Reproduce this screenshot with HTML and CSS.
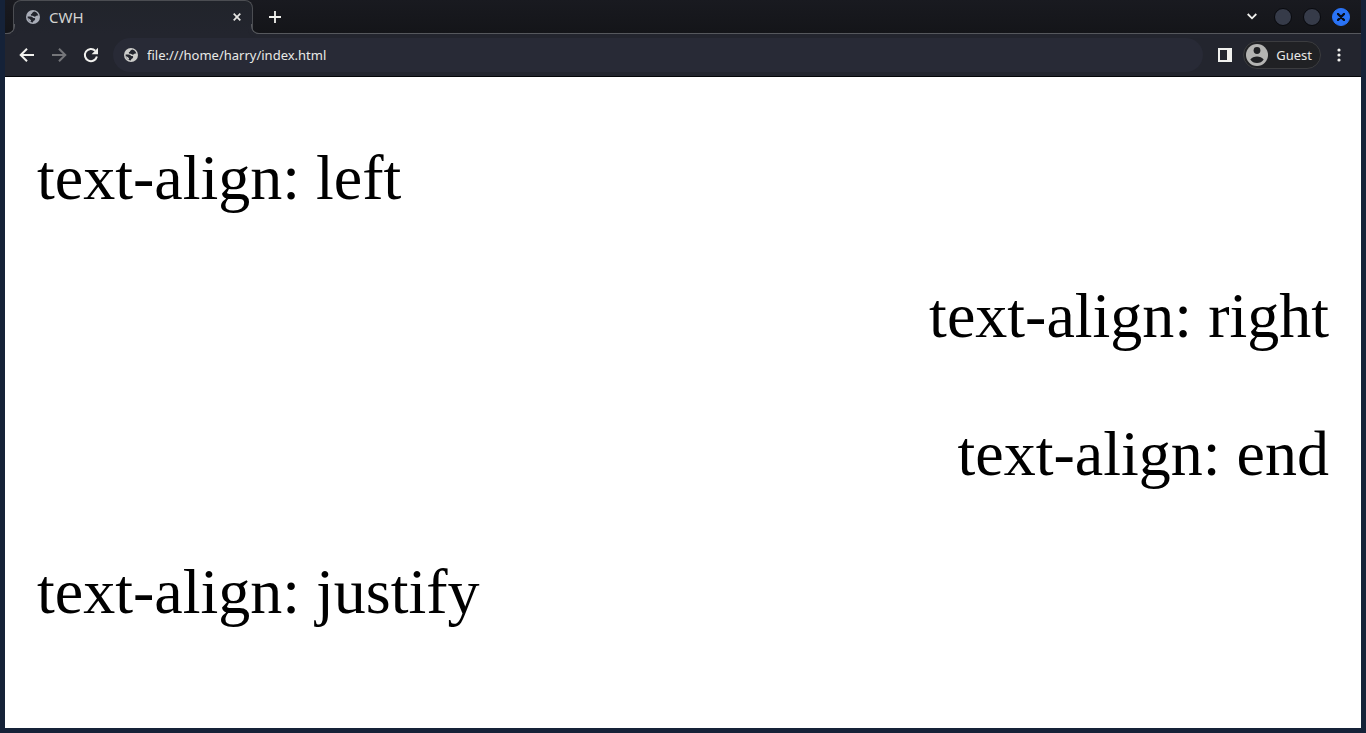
FILE: index.html
```html
<!DOCTYPE html>
<html lang="en">
<head>
<meta charset="utf-8">
<title>CWH</title>
<link rel="stylesheet" href="styles.css">
</head>
<body>
<svg class="defs" aria-hidden="true">
  <symbol id="globe" viewBox="0 0 14 14">
    <circle cx="7" cy="7" r="7" fill="currentColor"/>
    <path d="M8.200 1.600C6.800 2.200 6.300 3 5.900 3.800 4.800 4 4.500 5 5.100 5.600c.8.700 2 .2 2.600.700.8.600 1.800.4 2.300-.3.600-.6 1.500-.6 2.300-.6C11.700 3.400 10.200 2 8.200 1.600zM1.600 6.500h3.100c1.500 0 2.100.8 2.300 1.600h1.600c.9.700.7 1.900-.2 2.300-.9.300-1.200.6-1.300 1.400l-.2.700C4 12.300 1.600 10 1.600 6.500z" fill="#23252e"/>
    <path d="M1.900 8.300c1.300 0 1.600.9 2.600 1.400.8.500.6 1.500.2 2.100-1.600-.7-2.600-1.900-2.800-3.500z" fill="currentColor"/>
  </symbol>
</svg>
<div class="window">
  <header class="tabstrip">
    <div class="tab">
      <svg class="globe tab-globe" aria-hidden="true"><use href="#globe"/></svg>
      <span class="tab-title">CWH</span>
      <button class="icon-btn" aria-label="Close tab"><svg width="8" height="8" viewBox="0 0 8 8"><path d="M.7.7l6.600 6.600M7.300.7L.7 7.300" stroke="#e6e6e3" stroke-width="1.700"/></svg></button>
    </div>
    <button class="icon-btn new-tab" aria-label="New tab"><svg width="12" height="12" viewBox="0 0 12 12"><path d="M6 0v12M0 6h12" stroke="#f1f1ee" stroke-width="1.800"/></svg></button>
    <div class="controls">
      <button class="icon-btn chevron" aria-label="Search tabs"><svg width="10" height="7" viewBox="0 0 10 7"><path d="M.7 1l4.300 4.300L9.300 1" fill="none" stroke="#f1f1ee" stroke-width="1.800"/></svg></button>
      <button class="dot" aria-label="Minimize"></button>
      <button class="dot" aria-label="Maximize"></button>
      <button class="dot dot-close" aria-label="Close"><svg width="8" height="8" viewBox="0 0 8 8"><path d="M1 1l6 6M7 1L1 7" stroke="#080d18" stroke-width="2.400" stroke-linecap="round"/></svg></button>
    </div>
  </header>
  <nav class="toolbar">
    <button class="icon-btn nav-btn" aria-label="Back"><svg width="16" height="16" viewBox="0 0 16 16"><path d="M15 8H2.500M8 1.700L1.700 8 8 14.300" fill="none" stroke="#f1f1ee" stroke-width="2"/></svg></button>
    <button class="icon-btn nav-btn" aria-label="Forward"><svg width="16" height="16" viewBox="0 0 16 16"><path d="M1 8h12.500M8 1.700L14.300 8 8 14.300" fill="none" stroke="#75767a" stroke-width="2"/></svg></button>
    <button class="icon-btn nav-btn" aria-label="Reload"><svg width="16" height="16" viewBox="0 0 16 16"><path d="M13.900 9.500A6.100 6.100 0 1 1 12.300 3.700" fill="none" stroke="#f1f1ee" stroke-width="2"/><path d="M15 .8v6.400H8.600z" fill="#f1f1ee"/></svg></button>
    <label class="address">
      <svg class="globe" aria-hidden="true"><use href="#globe"/></svg>
      <input class="url" type="text" aria-label="Address" value="file:///home/harry/index.html">
    </label>
    <button class="icon-btn panel-btn" aria-label="Side panel"><svg width="14" height="14" viewBox="0 0 14 14"><path d="M0 0h14v14H0zM2 2v10h7V2z" fill="#f1f1ee" fill-rule="evenodd"/></svg></button>
    <button class="profile"><svg width="22" height="22" viewBox="0 0 22 22" aria-hidden="true"><circle cx="11" cy="11" r="11" fill="#b4b4b2"/><circle cx="11" cy="6.500" r="3.400" fill="#202124"/><path d="M4.300 15.500c1.500-2 4-3 6.700-3s5.200 1 6.700 3c-1.500 2.300-3.900 3.600-6.700 3.600s-5.200-1.300-6.700-3.600z" fill="#202124"/></svg>Guest</button>
    <button class="icon-btn menu" aria-label="Menu"><svg width="4" height="14" viewBox="0 0 4 14" fill="#f1f1ee"><circle cx="2" cy="2" r="1.600"/><circle cx="2" cy="7" r="1.600"/><circle cx="2" cy="12" r="1.600"/></svg></button>
  </nav>
  <main class="page">
    <p class="left">text-align: left</p>
    <p class="right">text-align: right</p>
    <p class="end">text-align: end</p>
    <p class="justify">text-align: justify</p>
  </main>
</div>
</body>
</html>
```
FILE: styles.css
```css
* { box-sizing: border-box; }
body {
  margin: 0;
  background: #152238;
  font-family: "Noto Sans", sans-serif;
}
button, input { font: inherit; color: inherit; border: 0; padding: 0; margin: 0; background: none; }
svg { display: block; flex: none; }
.defs { position: absolute; width: 0; height: 0; }
.window {
  display: flex;
  flex-direction: column;
  min-height: 100vh;
  padding: 0 5px 5px;
  color: #e9e9e6;
}
.icon-btn { display: flex; align-items: center; justify-content: center; flex: none; }
.tabstrip {
  display: flex;
  align-items: center;
  height: 34px;
  padding: 0 11px 0 8px;
  background: linear-gradient(#191a20, #141519);
  border-bottom: 1px solid #56585d;
}
.tab {
  position: relative;
  display: flex;
  align-items: center;
  align-self: flex-start;
  flex: none;
  width: 240px;
  height: 34px;
  margin-bottom: -1px;
  padding: 0 11px 1px 12px;
  background: linear-gradient(#21242b, #23252e);
  border: 1px solid #4b4d52;
  border-bottom: 0;
  border-radius: 8px 8px 0 0;
}
.tab::before, .tab::after {
  content: "";
  position: absolute;
  bottom: 0;
  width: 9px;
  height: 9px;
  border-bottom: 1px solid #56585d;
}
.tab::before {
  left: -9px;
  border-right: 1px solid #56585d;
  border-bottom-right-radius: 8px;
  box-shadow: 3px 3px 0 #23252e;
}
.tab::after {
  right: -9px;
  border-left: 1px solid #56585d;
  border-bottom-left-radius: 8px;
  box-shadow: -3px 3px 0 #23252e;
}
.globe { width: 14px; height: 14px; color: #cdcdcb; }
.tab-globe { color: #a9adb8; }
.tab-title { flex: 1; margin-left: 9px; font-size: 15px; line-height: 18px; padding-bottom: 1px; color: #d4d4d1; }
.new-tab { width: 24px; height: 24px; margin-left: 10px; }
.controls { display: flex; align-items: center; gap: 11px; margin-left: auto; }
.chevron { margin-right: 6px; }
.dot {
  display: flex;
  align-items: center;
  justify-content: center;
  width: 18px;
  height: 18px;
  background: #363b49;
  border: 1px solid #08090d;
  border-radius: 50%;
}
.dot-close { background: #2a73f6; border-color: #2a73f6; }
.toolbar {
  display: flex;
  align-items: center;
  height: 43px;
  padding: 0 20px 0 14px;
  background: #23252e;
  border-bottom: 1px solid #050609;
}
.nav-btn { width: 16px; height: 16px; margin-right: 16px; }
.address {
  display: flex;
  align-items: center;
  flex: 1;
  height: 34px;
  margin-left: -2px;
  padding: 0 11px;
  border-radius: 17px;
  background: #282a36;
}
.url { flex: 1; min-width: 0; margin-left: 9px; font-size: 13px; line-height: 18px; outline: 0; }
.panel-btn { margin-left: 15px; }
.profile {
  display: flex;
  align-items: center;
  gap: 8px;
  height: 28px;
  margin-left: 11px;
  padding: 0 8px 0 2px;
  border: 1px solid #3b3c3f;
  border-radius: 14px;
  background: #202124;
  font-size: 13px;
}
.menu { margin-left: 16px; }
.page {
  flex: 1;
  padding: 0 32px;
  background: #fff;
  color: #000;
  font-family: "Liberation Serif", serif;
  font-size: 64px;
  line-height: 74px;
}
.page p { margin: 64px 0; }
.left { text-align: left; }
.right { text-align: right; }
.end { text-align: end; }
.justify { text-align: justify; }
```
